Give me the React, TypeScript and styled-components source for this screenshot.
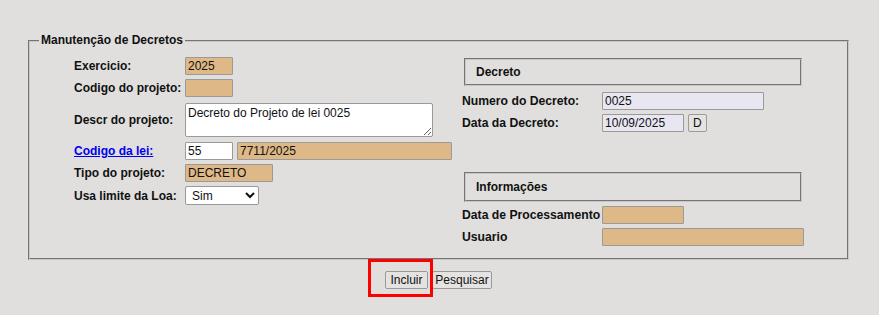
import React from "react";
import styled, { createGlobalStyle } from "styled-components";

const GlobalStyle = createGlobalStyle`
  html, body { margin: 0; padding: 0; background: #e0dfdd; }
  body { font-family: "Liberation Sans", Arial, sans-serif; font-size: 12px; color: #111; }
`;

const Page = styled.div`
  width: 879px;
  height: 315px;
  box-sizing: border-box;
  padding: 33px 0 0 28px;
`;

const MainFieldset = styled.fieldset`
  box-sizing: border-box;
  width: 821px;
  margin: 0;
  padding: 9px 0 12px 0;
  border: 2px groove #c8c8c8;
`;

const Legend = styled.legend`
  font-weight: bold;
  font-size: 12px;
  padding: 0 2px;
  margin-left: 9px;
  line-height: 15px;
`;

const Columns = styled.div`
  display: grid;
  grid-template-columns: 388px 342px;
  margin-left: 44px;
`;

const LeftForm = styled.div`
  display: grid;
  grid-template-columns: 111px auto;
  row-gap: 4px;
  align-items: center;
  align-content: start;
`;

const RightForm = styled.div`
  display: grid;
  grid-template-columns: 140px auto;
  align-items: center;
  align-content: start;
`;

const Label = styled.label<{ $size?: number }>`
  font-weight: bold;
  font-size: ${(p) => p.$size ?? 12}px;
  white-space: nowrap;
`;

const LinkLabel = styled.a`
  font-weight: bold;
  font-size: 12px;
  color: #0000ee;
  text-decoration: underline;
  white-space: nowrap;
`;

const Field = styled.div`
  display: flex;
  align-items: center;
  gap: 4px;
`;

const Input = styled.input<{ $w: number; $tone?: "tan" | "white" | "lav" }>`
  box-sizing: border-box;
  width: ${(p) => p.$w}px;
  height: 18px;
  margin: 0;
  padding: 0 2px;
  font-family: "Liberation Sans", Arial, sans-serif;
  font-size: 12px;
  color: #111;
  border: 1px solid #9a9a9a;
  border-radius: 1px;
  background: ${(p) =>
    p.$tone === "white" ? "#ffffff" : p.$tone === "lav" ? "#e7e6f1" : "#deb887"};
  outline: none;
`;

const TextArea = styled.textarea`
  box-sizing: border-box;
  width: 248px;
  height: 34px;
  margin: 2px 0 1px;
  padding: 2px 2px;
  font-family: "Liberation Sans", Arial, sans-serif;
  font-size: 12px;
  color: #111;
  border: 1px solid #9a9a9a;
  border-radius: 2px;
  background: #fff;
  display: block;
`;

const Select = styled.select`
  box-sizing: border-box;
  width: 74px;
  height: 19px;
  margin: 0;
  padding: 0 2px;
  font-family: "Liberation Sans", Arial, sans-serif;
  font-size: 12px;
  color: #111;
  border: 1px solid #9a9a9a;
  border-radius: 2px;
  background: #fff;
`;

const SectionBox = styled.div<{ $h: number }>`
  grid-column: 1 / span 2;
  box-sizing: border-box;
  margin-left: 2px;
  width: 338px;
  height: ${(p) => p.$h}px;
  border: 2px groove #c8c8c8;
  padding: 0 0 0 10px;
  display: flex;
  align-items: center;
  font-weight: bold;
  font-size: 12px;
`;

const RightRow = styled.div<{ $mt: number }>`
  display: contents;
  & > * { margin-top: ${(p) => p.$mt}px; }
`;

const SmallButton = styled.button`
  box-sizing: border-box;
  height: 18px;
  padding: 0 4px;
  margin: 0;
  font-family: "Liberation Sans", Arial, sans-serif;
  font-size: 12px;
  color: #111;
  background: #e4e3e1;
  border: 1px solid #9a9a9a;
  border-radius: 2px;
`;

const ButtonBar = styled.div`
  display: flex;
  justify-content: center;
  gap: 4px;
  margin-top: 11px;
  width: 821px;
`;

const Highlight = styled.span`
  position: relative;
  display: inline-flex;
`;

const RedFrame = styled.span`
  position: absolute;
  left: -17px;
  top: -12px;
  width: 65px;
  height: 38px;
  box-sizing: border-box;
  border: 3px solid #ff0000;
  pointer-events: none;
`;

const Button = styled(SmallButton)<{ $w: number }>`
  width: ${(p) => p.$w}px;
  padding: 0;
`;

const R = 12.2;

export default function App() {
  return (
    <>
      <GlobalStyle />
      <Page>
        <MainFieldset>
          <Legend>Manutenção de Decretos</Legend>
          <Columns>
            <LeftForm>
              <Label>Exercicio:</Label>
              <Field>
                <Input $w={48} defaultValue="2025" readOnly />
              </Field>
              <Label>Codigo do projeto:</Label>
              <Field>
                <Input $w={48} defaultValue="" readOnly />
              </Field>
              <Label>Descr do projeto:</Label>
              <Field>
                <TextArea defaultValue="Decreto do Projeto de lei 0025" />
              </Field>
              <LinkLabel href="#">Codigo da lei:</LinkLabel>
              <Field>
                <Input $w={48} $tone="white" defaultValue="55" />
                <Input $w={215} defaultValue="7711/2025" readOnly />
              </Field>
              <Label>Tipo do projeto:</Label>
              <Field>
                <Input $w={88} defaultValue="DECRETO" readOnly />
              </Field>
              <Label>Usa limite da Loa:</Label>
              <Field>
                <Select defaultValue="Sim">
                  <option>Sim</option>
                  <option>Não</option>
                </Select>
              </Field>
            </LeftForm>
            <RightForm>
              <RightRow $mt={1}>
                <SectionBox $h={28}>Decreto</SectionBox>
              </RightRow>
              <RightRow $mt={6}>
                <Label $size={R}>Numero do Decreto:</Label>
                <Field>
                  <Input $w={162} $tone="lav" defaultValue="0025" />
                </Field>
              </RightRow>
              <RightRow $mt={4}>
                <Label $size={R}>Data da Decreto:</Label>
                <Field>
                  <Input $w={82} $tone="lav" defaultValue="10/09/2025" />
                  <SmallButton>D</SmallButton>
                </Field>
              </RightRow>
              <RightRow $mt={40}>
                <SectionBox $h={30}>Informações</SectionBox>
              </RightRow>
              <RightRow $mt={4}>
                <Label $size={R}>Data de Processamento</Label>
                <Field>
                  <Input $w={82} defaultValue="" readOnly />
                </Field>
              </RightRow>
              <RightRow $mt={4}>
                <Label $size={R}>Usuario</Label>
                <Field>
                  <Input $w={202} defaultValue="" readOnly />
                </Field>
              </RightRow>
            </RightForm>
          </Columns>
        </MainFieldset>
        <ButtonBar>
          <Highlight>
            <Button $w={43}>Incluir</Button>
            <RedFrame />
          </Highlight>
          <Button $w={60}>Pesquisar</Button>
        </ButtonBar>
      </Page>
    </>
  );
}
